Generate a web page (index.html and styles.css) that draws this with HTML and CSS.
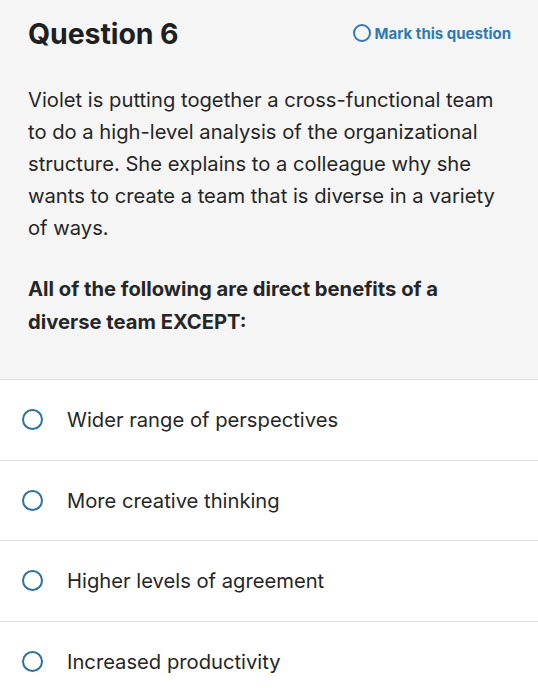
FILE: index.html
```html
<!DOCTYPE html>
<html>
<head>
<meta charset="utf-8">
<link rel="stylesheet" href="styles.css">
</head>
<body>
<div class="stem">
  <div class="head">
    <h1 class="title">Question 6</h1>
    <div class="mark">
      <span class="mark-ring"></span>
      <span>Mark this question</span>
    </div>
  </div>
  <p class="text">Violet is putting together a cross-functional team to do a high-level analysis of the organizational structure. She explains to a colleague why she wants to create a team that is diverse in a variety of ways.</p>
  <p class="prompt">All of the following are direct benefits of a diverse team EXCEPT:</p>
</div>
<ul class="options">
  <li class="option"><span class="radio"></span><span>Wider range of perspectives</span></li>
  <li class="option"><span class="radio"></span><span>More creative thinking</span></li>
  <li class="option"><span class="radio"></span><span>Higher levels of agreement</span></li>
  <li class="option"><span class="radio"></span><span>Increased productivity</span></li>
</ul>
</body>
</html>
```
FILE: styles.css
```css
* { box-sizing: border-box; }
html, body { margin: 0; padding: 0; background: #fff; }
body {
  font-family: "Inter", "Liberation Sans", sans-serif;
  color: #262626;
  width: 538px;
}
.stem {
  background: #f5f5f5;
  padding: 13px 28px 41px 28px;
  border-bottom: 1px solid #e0e0e0;
}
.head {
  display: flex;
  align-items: center;
  justify-content: space-between;
  height: 40px;
}
.title {
  margin: 0;
  font-size: 28.5px;
  font-weight: 700;
  color: #1f1f1f;
  letter-spacing: -0.1px;
}
.mark {
  display: flex;
  align-items: center;
  gap: 4px;
  color: #2f7bb0;
  font-size: 15px;
  font-weight: 700;
  margin-right: -1px;
}
.mark-ring {
  width: 18px;
  height: 18px;
  border: 2px solid #2f7bb0;
  border-radius: 50%;
}
.text {
  margin: 31px 0 0 0;
  font-size: 20.2px;
  line-height: 32px;
}
.prompt {
  margin: 28px 0 0 0;
  font-size: 20.2px;
  line-height: 33px;
  font-weight: 700;
}
.options {
  list-style: none;
  margin: 0;
  padding: 0;
}
.option {
  display: flex;
  align-items: center;
  gap: 24px;
  height: 80.5px;
  padding-left: 22px;
  border-bottom: 1px solid #e0e0e0;
  font-size: 20.2px;
}
.radio {
  width: 21px;
  height: 21px;
  border: 2px solid #2b71a0;
  border-radius: 50%;
  flex: none;
}
```
